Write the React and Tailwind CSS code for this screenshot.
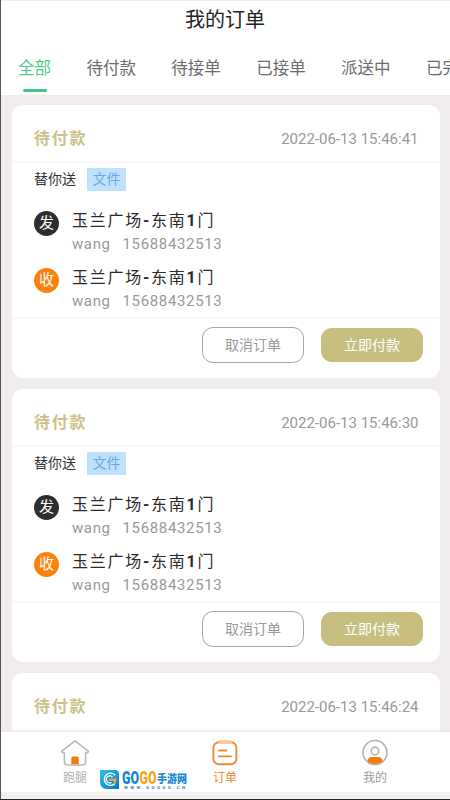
import { useState } from 'react';

const tabs = ['全部', '待付款', '待接单', '已接单', '派送中', '已完成'];

const orders = [
  { id: 1, time: '2022-06-13 15:46:41' },
  { id: 2, time: '2022-06-13 15:46:30' },
  { id: 3, time: '2022-06-13 15:46:24' },
];

const HomeIcon = () => (
  <svg width="30" height="28" viewBox="0 0 30 28" fill="none">
    <path
      d="M15 1.8 L1.8 12.2 Q1.4 13.6 3 13.6 H4.4 V23 Q4.4 26 7.4 26 H22.6 Q25.6 26 25.6 23 V13.6 H27 Q28.6 13.6 28.2 12.2 Z"
      stroke="#b9b9b9"
      strokeWidth="1.6"
      strokeLinejoin="round"
    />
    <path d="M11.3 25.3 V19 Q11.3 17.5 12.8 17.5 H17.3 Q18.8 17.5 18.8 19 V25.3 Z" fill="#ef7d12" />
  </svg>
);

const OrderIcon = () => (
  <svg width="30" height="28" viewBox="0 0 30 28" fill="none">
    <rect x="3.4" y="3.2" width="23" height="22" rx="5.5" stroke="#eb8a35" strokeWidth="1.9" />
    <rect x="8.5" y="1" width="13" height="4" rx="1.5" fill="#f9c9a2" />
    <path d="M9 11.5 H16.5 M9 17.4 H21" stroke="#eb8a35" strokeWidth="1.8" strokeLinecap="round" />
  </svg>
);

const UserIcon = () => (
  <svg width="30" height="28" viewBox="0 0 30 28" fill="none">
    <circle cx="15" cy="13.6" r="12" stroke="#b0b0b0" strokeWidth="1.5" />
    <circle cx="15" cy="12" r="3.8" stroke="#b8b8b8" strokeWidth="1.7" />
    <path d="M7.5 22.5 Q7.5 18 12 18 H18 Q22.5 18 22.5 22.5 Q19 25 15 25 Q11 25 7.5 22.5 Z" fill="#f57c0a" />
  </svg>
);

const SiteLogo = () => (
  <div className="absolute left-[99px] top-[38px] flex items-start">
    <svg width="19" height="19" viewBox="0 0 19 19" fill="none">
      <defs>
        <linearGradient id="logo" x1="0" y1="0" x2="1" y2="1">
          <stop offset="0" stopColor="#35bdec" />
          <stop offset="1" stopColor="#0878c8" />
        </linearGradient>
      </defs>
      <path d="M0 0 H15 Q19 0 19 4 V19 H7 Q0 19 0 12 Z" fill="url(#logo)" />
      <path d="M15.2 5.2 A6.2 6.2 0 1 0 15 13.6" stroke="#fff" strokeWidth="1.4" />
      <path d="M12.5 7 A3.5 3.5 0 1 0 11.5 12.5" stroke="#e8f8ff" strokeWidth="1.3" />
      <path d="M9 8.5 H16.5 Q17 12.5 13.8 13.8 V11 H9 Z" fill="#f6a42c" />
    </svg>
    <svg width="66" height="21" viewBox="0 0 66 21" className="ml-[2.5px] font-['Roboto','Noto_Sans_CJK_SC',sans-serif] font-black">
      <text x="0" y="14" fontSize="17.5" textLength="17" lengthAdjust="spacingAndGlyphs" fill="#1284d2">GO</text>
      <text x="17.5" y="14" fontSize="17.5" textLength="17" lengthAdjust="spacingAndGlyphs" fill="#f9a51c">GO</text>
      <text x="35" y="12.5" fontSize="11" textLength="30" lengthAdjust="spacingAndGlyphs" fill="#1787d0">手游网</text>
      <text x="2" y="19.3" fontSize="4.4" textLength="61" fill="#3c9bd4">WWW.GOOGO.CN</text>
    </svg>
  </div>
);

const Address = ({ mark, markClass }) => (
  <div className="flex h-[57px] pl-[22px]">
    <div className={`mt-[3px] flex size-[25px] items-center justify-center rounded-full text-[15px] leading-none text-white ${markClass}`}>
      <span className="-mt-px">{mark}</span>
    </div>
    <div className="ml-[13px] pt-px">
      <div className="h-[23px] whitespace-nowrap text-[16px] leading-6 tracking-[1.75px] text-[#2a2a2a]">
        玉兰广场<b>-</b>东南<b>1</b>门
      </div>
      <div className="flex h-6 text-[15px] leading-6 text-[#999]">
        <span className="w-[50.5px] tracking-[0.6px]">wang</span>
        <span className="tracking-[0.65px]">15688432513</span>
      </div>
    </div>
  </div>
);

const OrderCard = ({ order }) => (
  <div className="h-[273px] shrink-0 rounded-[11px] bg-white">
    <div className="flex h-[58px] items-center justify-between border-b-2 border-[#f7f7f7] pl-[22px] pr-[21.5px] pt-[11px]">
      <span className="text-[16px] font-bold tracking-[1.7px] text-[#cbc188]">待付款</span>
      <span className="pt-px text-[15px] text-[#999]">{order.time}</span>
    </div>
    <div className="flex h-[45px] items-start pl-[22px] pt-[5px]">
      <span className="text-[14px] leading-[23px] text-[#333]">替你送</span>
      <span className="ml-[11px] flex h-[23px] w-[39px] items-center justify-center bg-[#c0e1fe] text-[14px] text-[#67a9e3]">文件</span>
    </div>
    <div className="h-[109px]">
      <Address mark="发" markClass="bg-[#2e2e2e]" />
      <Address mark="收" markClass="bg-[#fc810d]" />
    </div>
    <div className="flex h-[61px] items-start justify-end border-t-2 border-[#f7f7f7] pr-[17px] pt-[7px]">
      <button className="mt-px h-9 w-[102px] rounded-[11px] border-[1.5px] border-[#a5a5a5] text-[14px] leading-none text-[#999]">
        取消订单
      </button>
      <button className="ml-[17px] mt-[2px] h-[34px] w-[102px] rounded-[11px] bg-[#c8be80] text-[14px] leading-none text-white">
        立即付款
      </button>
    </div>
  </div>
);

const App = () => {
  const [active, setActive] = useState('全部');

  return (
    <div className="flex h-[800px] w-[450px] flex-col overflow-hidden border-b border-l border-b-[#222] border-l-[#5c5558] bg-[#f0eceb] font-['Roboto','Noto_Sans_CJK_SC',sans-serif]">
      <header className="h-[95px] shrink-0 border-t border-[#eee] bg-white">
        <h1 className="pr-px pt-1 text-center text-[20px] leading-[30px] text-[#222]">我的订单</h1>
        <nav className="mt-[17px] flex h-[43px] gap-[35.4px] overflow-hidden pl-[17px]">
          {tabs.map((tab) => (
            <button
              key={tab}
              onClick={() => setActive(tab)}
              className={`flex shrink-0 flex-col items-center text-[16.5px] leading-[34px] ${active === tab ? 'text-[#4fcb8b]' : 'text-[#6c6c6c]'}`}
            >
              {tab}
              {active === tab && <span className="mt-[3px] h-[2.5px] w-6 rounded-full bg-[#48c586]" />}
            </button>
          ))}
        </nav>
      </header>

      <main className="flex flex-1 flex-col gap-[11px] overflow-hidden pl-[11px] pr-[10px] pt-[10px]">
        {orders.map((order) => (
          <OrderCard key={order.id} order={order} />
        ))}
      </main>

      <footer className="relative h-[68px] shrink-0 border-t border-[#e9e6e5] bg-[#f1f1f1]">
        <div className="-ml-px grid h-[60px] grid-cols-3 bg-white text-[12px] leading-[16px] text-[#999]">
          <div className="flex flex-col items-center pt-[7px]">
            <HomeIcon />
            <span className="mt-[3px] text-[#b0b0b0]">跑腿</span>
          </div>
          <div className="flex flex-col items-center pt-[7px]">
            <OrderIcon />
            <span className="mt-[3px] text-[#e98a32]">订单</span>
          </div>
          <div className="flex flex-col items-center pt-[7px]">
            <UserIcon />
            <span className="mt-[3px]">我的</span>
          </div>
        </div>
        <SiteLogo />
      </footer>
    </div>
  );
};

export default App;
